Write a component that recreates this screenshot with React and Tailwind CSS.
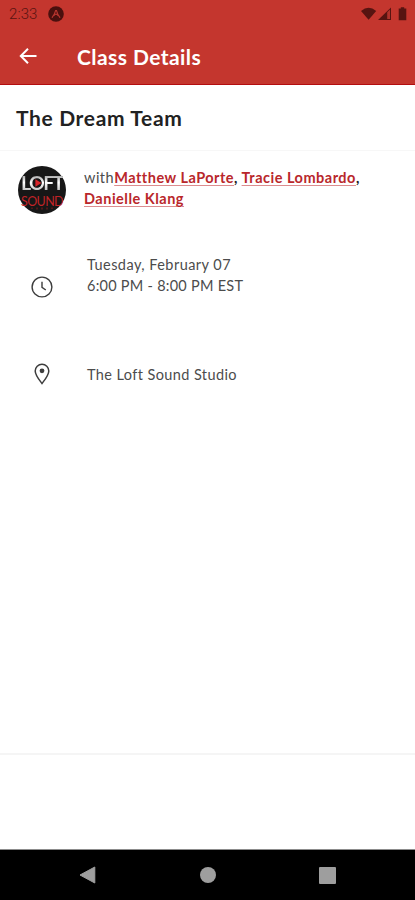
import React from "react";

const StatusBar = () => (
  <div className="flex h-7 items-center justify-between pl-[9px] pr-[7px] text-[#571411]">
    <div className="flex items-center">
      <span className="w-[39px] font-[Roboto] text-[15px] font-light leading-none tracking-[0.1px]">
        2:33
      </span>
      <svg className="h-4 w-4" viewBox="0 0 16 16">
        <circle cx="8" cy="8" r="7.8" fill="#4a100e" />
        <path d="M4.2 11.4Q6.6 8.4 7.6 4.6h.9Q9.4 8.4 11.8 11.4M6 9.4Q8 6.8 10 9.4" fill="none" stroke="#b8352e" strokeWidth="1.2" strokeLinecap="round" />
      </svg>
    </div>
    <svg className="h-4 w-[48px]" viewBox="0 0 48 16">
      <path d="M1 5Q8.6-1.4 16.2 5L8.6 13.8Z" fill="#571411" />
      <path d="M18 14 31 1.5V14Z" fill="#571411" />
      <path d="M27.2 6.2 30 3.5V13H27.2Z" fill="#b0322b" />
      <path d="M40.8 1.2h3.4v1.3h2.1V14.2h-7.6V2.5h2.1Z" fill="#571411" />
    </svg>
  </div>
);

const StudioLogo = () => (
  <div className="relative flex h-12 w-12 flex-col items-center rounded-full bg-[#171717] pt-[5px]">
    <span className="bg-linear-to-b from-[#777] via-white to-[#aaa] bg-clip-text text-[19.5px] font-bold leading-[23px] tracking-[-1.5px] text-transparent">
      LOFT
    </span>
    <span className="text-[12.5px] leading-[15px] tracking-[-0.6px] text-[#c02327]">SOUND</span>
    <svg className="absolute left-0 top-0 h-12 w-12" viewBox="0 0 48 48">
      <circle cx="19.5" cy="17" r="4.2" fill="#171717" />
      <path d="M17.4 13.2 23.4 17 17.4 20.8Z" fill="#d9262b" />
      <path d="M14 41.5v1.5M19 41.5v2M24 41.5v2M29 41.5v2M34 41.5v1.5" stroke="#651719" strokeWidth="1.5" />
    </svg>
  </div>
);

const Teacher = ({ name }) => (
  <a className="font-bold text-[#b9272b] underline decoration-[#dc8d8f] decoration-1 underline-offset-2" href="#">
    {name}
  </a>
);

export default function App() {
  return (
    <div className="flex h-[900px] w-[415px] flex-col overflow-hidden bg-white font-[Lato,sans-serif] text-[#4c4c4c]">
      <header className="h-[85px] border-b border-[#b30d10] bg-[#c4362e]">
        <StatusBar />
        <div className="flex h-[56px] items-center pl-[19px] text-white">
          <svg className="h-[18px] w-[18px]" viewBox="0 0 18 18" fill="none" stroke="#fff" strokeWidth="2">
            <path d="M17.5 9H2M9 1.8 1.8 9 9 16.2" />
          </svg>
          <h1 className="ml-10 whitespace-nowrap text-[21px] font-bold leading-none tracking-[0.43px]">
            Class Details
          </h1>
        </div>
      </header>

      <div className="flex h-[66px] items-center border-b border-[#f7f7f7] pl-4">
        <h2 className="whitespace-nowrap text-[21px] font-bold tracking-[0.65px] text-[#222]">The Dream Team</h2>
      </div>

      <main className="flex grow flex-col text-[14.5px] leading-[21px]">
        <section className="flex pl-[18px] pt-[15px]">
          <StudioLogo />
          <div className="ml-[18px] pt-[1px] tracking-[0.5px]">
            <p className="whitespace-nowrap">
              with
              <Teacher name="Matthew LaPorte" />
              <b className="text-[#222]">, </b>
              <Teacher name="Tracie Lombardo" />
              <b className="text-[#222]">,</b>
            </p>
            <p>
              <Teacher name="Danielle Klang" />
            </p>
          </div>
        </section>

        <section className="mt-10 flex pl-[31px]">
          <svg className="mt-[22px] h-[22px] w-[22px]" viewBox="0 0 22 22" fill="none" stroke="#3d3d3d" strokeWidth="1.4">
            <circle cx="11" cy="11" r="9.9" />
            <path d="M11 5.8v5.6l3.8 2.6" />
          </svg>
          <div className="ml-[34px] whitespace-nowrap">
            <p className="tracking-[0.45px]">Tuesday, February 07</p>
            <p className="tracking-[0.26px]">6:00 PM - 8:00 PM EST</p>
          </div>
        </section>

        <section className="mt-[65px] flex items-center pl-[34px]">
          <svg className="h-[22px] w-4" viewBox="0 0 16 22" fill="none" stroke="#3d3d3d" strokeWidth="1.5">
            <path d="M8 20.5C5.6 17.4 1.2 12.2 1.2 8a6.8 6.8 0 0 1 13.6 0c0 4.2-4.4 9.4-6.8 12.5Z" />
            <circle cx="8" cy="7.8" r="2.4" fill="#3d3d3d" stroke="none" />
          </svg>
          <p className="ml-[37px] mt-px whitespace-nowrap tracking-[0.4px]">The Loft Sound Studio</p>
        </section>
      </main>

      <div className="h-[97px] border-b border-t-2 border-b-[#8c8c8c] border-t-[#f5f5f5]" />

      <nav className="flex h-[50px] items-center justify-between bg-black pl-[79px] pr-[79px]">
        <svg className="h-[18px] w-[17px]" viewBox="0 0 17 18">
          <path d="M15.8 1v16L1 9Z" fill="#9e9e9e" stroke="#9e9e9e" strokeLinejoin="round" />
        </svg>
        <div className="h-4 w-4 rounded-full bg-[#9e9e9e]" />
        <div className="h-[17px] w-[17px] rounded-[1px] bg-[#9e9e9e]" />
      </nav>
    </div>
  );
}
